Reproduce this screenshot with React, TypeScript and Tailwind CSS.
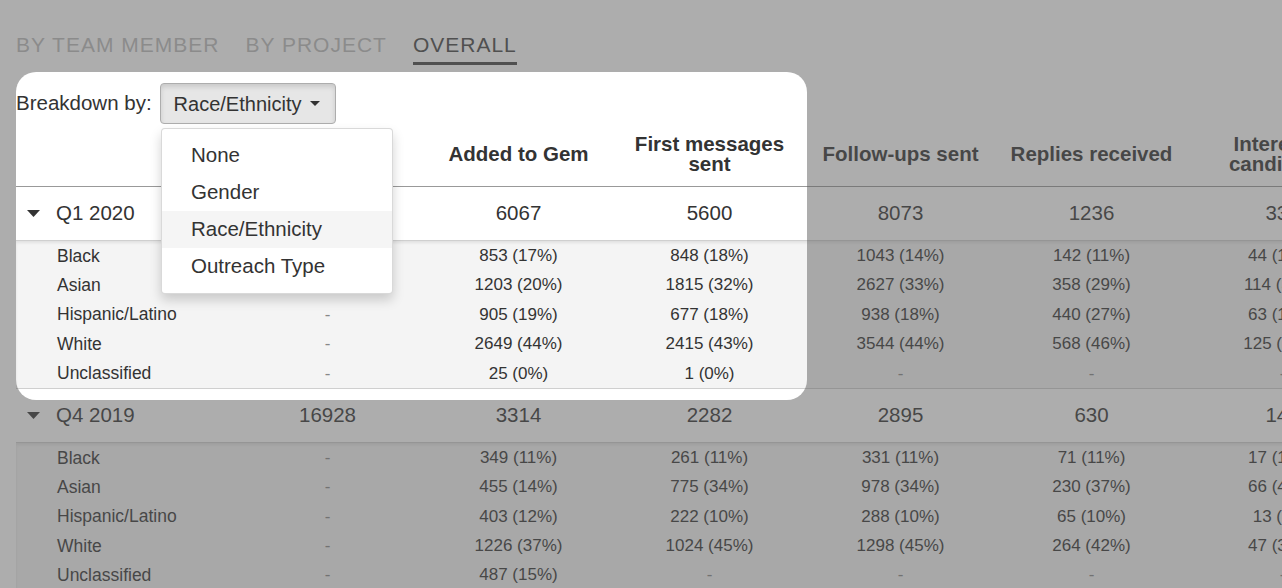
import React from 'react';

type Cell = string;

interface Group {
  label: string;
  total: Cell[];
  rows: { label: string; values: Cell[] }[];
}

const headers: React.ReactNode[] = [
  '',
  '',
  'Added to Gem',
  <>First messages<br />sent</>,
  'Follow-ups sent',
  'Replies received',
  <>Interested<br />candidates</>,
];

const groups: Group[] = [
  {
    label: 'Q1 2020',
    total: ['15980', '6067', '5600', '8073', '1236', '336'],
    rows: [
      { label: 'Black', values: ['-', '853 (17%)', '848 (18%)', '1043 (14%)', '142 (11%)', '44 (13%)'] },
      { label: 'Asian', values: ['-', '1203 (20%)', '1815 (32%)', '2627 (33%)', '358 (29%)', '114 (34%)'] },
      { label: 'Hispanic/Latino', values: ['-', '905 (19%)', '677 (18%)', '938 (18%)', '440 (27%)', '63 (19%)'] },
      { label: 'White', values: ['-', '2649 (44%)', '2415 (43%)', '3544 (44%)', '568 (46%)', '125 (37%)'] },
      { label: 'Unclassified', values: ['-', '25 (0%)', '1 (0%)', '-', '-', '-'] },
    ],
  },
  {
    label: 'Q4 2019',
    total: ['16928', '3314', '2282', '2895', '630', '143'],
    rows: [
      { label: 'Black', values: ['-', '349 (11%)', '261 (11%)', '331 (11%)', '71 (11%)', '17 (12%)'] },
      { label: 'Asian', values: ['-', '455 (14%)', '775 (34%)', '978 (34%)', '230 (37%)', '66 (46%)'] },
      { label: 'Hispanic/Latino', values: ['-', '403 (12%)', '222 (10%)', '288 (10%)', '65 (10%)', '13 (9%)'] },
      { label: 'White', values: ['-', '1226 (37%)', '1024 (45%)', '1298 (45%)', '264 (42%)', '47 (33%)'] },
      { label: 'Unclassified', values: ['-', '487 (15%)', '-', '-', '-', '-'] },
    ],
  },
];

const grid = 'grid grid-cols-[216px_repeat(6,191px)]';

const Triangle = () => (
  <svg width="13" height="7" viewBox="0 0 13 7" className="shrink-0">
    <path d="M0 0 H13 L6.5 7 Z" fill="#333" />
  </svg>
);

function GroupRows({ group }: { group: Group }) {
  return (
    <>
      <div className={`${grid} h-[54px] items-center bg-white border-b border-[#cfcfcf] text-[20.5px]`}>
        <div className="flex items-center gap-[16px] pl-[11px]">
          <Triangle />
          <span>{group.label}</span>
        </div>
        {group.total.map((v, i) => (
          <div key={i} className="text-center">{v}</div>
        ))}
      </div>
      <div className="bg-[#f4f4f4] border-b border-[#cfcfcf] shadow-[inset_0_2px_3px_rgba(0,0,0,0.08)]">
        {group.rows.map((r) => (
          <div key={r.label} className={`${grid} h-[29.4px] items-center`}>
            <div className="pl-[41px] text-[17.5px]">{r.label}</div>
            {r.values.map((v, i) => (
              <div key={i} className={`text-center text-[17px] ${v === '-' ? 'text-[#888]' : ''}`}>{v}</div>
            ))}
          </div>
        ))}
      </div>
    </>
  );
}

export default function App() {
  return (
    <div className="relative w-[1282px] h-[588px] overflow-hidden bg-white text-[#333] font-['Liberation_Sans',Arial,sans-serif]">
      {/* tabs */}
      <div className="flex gap-[26px] pl-4 pt-[33px] text-[21px] leading-[23px] tracking-[1px]">
        <div className="pb-[9px] text-[#bbb]">BY TEAM MEMBER</div>
        <div className="pb-[9px] text-[#bbb]">BY PROJECT</div>
        <div className="pb-[6px] border-b-[3px] border-[#444] text-[#444]">OVERALL</div>
      </div>

      {/* breakdown selector */}
      <div className="flex items-center gap-[8px] pl-4 mt-[18px] h-[41px]">
        <span className="text-[20.5px]">Breakdown by:</span>
        <button className="flex items-center h-[41px] pl-[13px] pr-[15px] gap-[9px] rounded-[4px] border border-[#adadad] bg-[#e6e6e6] shadow-[inset_0_3px_5px_rgba(0,0,0,0.125)] text-[20px] text-[#333]">
          Race/Ethnicity
          <span className="w-0 h-0 border-x-[5px] border-x-transparent border-t-[5px] border-t-[#333]" />
        </button>
      </div>

      {/* table */}
      <div className="ml-4 mt-px overflow-hidden">
        <div className="w-[1362px]">
          <div className={`${grid} h-[62px] items-center pb-1 border-b border-[#999] text-[20.5px] font-bold leading-[20px]`}>
            {headers.map((h, i) => (
              <div key={i} className="text-center">{h}</div>
            ))}
          </div>
          {groups.map((g) => (
            <GroupRows key={g.label} group={g} />
          ))}
        </div>
      </div>

      {/* dropdown menu */}
      <div className="absolute left-[161px] top-[128px] w-[232px] py-[8px] bg-white rounded-[4px] border border-[rgba(0,0,0,0.15)] shadow-[0_6px_12px_rgba(0,0,0,0.175)] text-[20.5px]">
        {['None', 'Gender', 'Race/Ethnicity', 'Outreach Type'].map((o) => (
          <div key={o} className={`h-[37px] flex items-center pl-[29px] ${o === 'Race/Ethnicity' ? 'bg-[#f5f5f5]' : ''}`}>
            {o}
          </div>
        ))}
      </div>

      {/* spotlight overlay */}
      <div className="absolute left-[16px] top-[72px] w-[791px] h-[328px] rounded-[20px] shadow-[0_0_0_2000px_rgba(91,91,91,0.5)] pointer-events-none z-10" />
    </div>
  );
}
